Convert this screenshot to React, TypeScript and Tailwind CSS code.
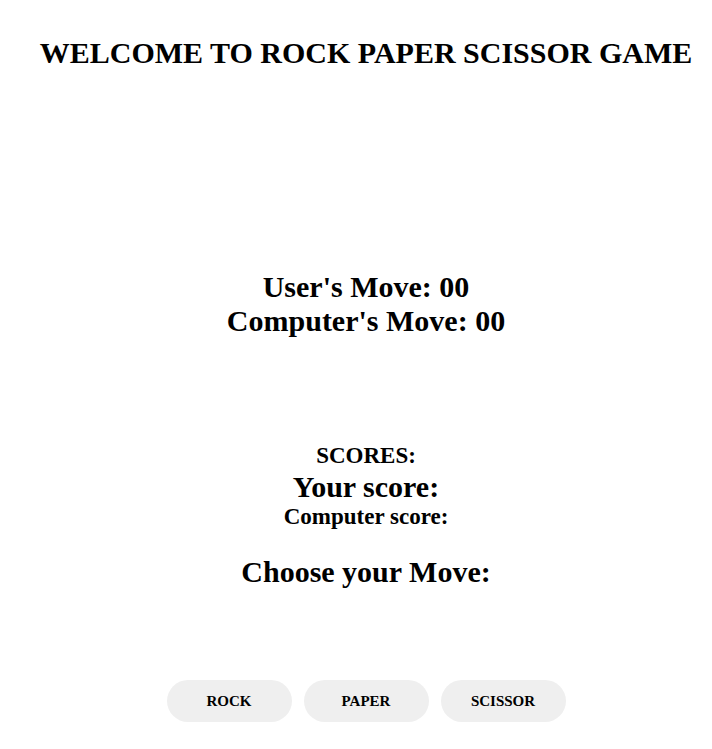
export default function App() {
  return (
    <div className="min-h-[749px] bg-white text-black text-center pl-[20px] font-['Liberation_Serif','Times_New_Roman',serif]">
      <h1 className="pt-[35px] text-[30px] font-bold leading-[36px]">WELCOME TO ROCK PAPER SCISSOR GAME</h1>
      <div className="mt-[199px] text-[30px] font-bold leading-[34px]">
        <div>User's Move: 00</div>
        <div>Computer's Move: 00</div>
      </div>
      <div className="mt-[104px] font-bold">
        <div className="text-[23px] leading-[28px]">SCORES:</div>
        <div className="text-[30px] leading-[33px]">Your score:</div>
        <div className="text-[23px] leading-[28px]">Computer score:</div>
      </div>
      <div className="mt-[24px] text-[30px] font-bold leading-[34px]">Choose your Move:</div>
      <div className="mt-[91px] flex justify-center gap-[12px]">
        <button className="w-[125px] h-[42px] rounded-full bg-[#efefef] text-[15px] font-bold">ROCK</button>
        <button className="w-[125px] h-[42px] rounded-full bg-[#efefef] text-[15px] font-bold">PAPER</button>
        <button className="w-[125px] h-[42px] rounded-full bg-[#efefef] text-[15px] font-bold">SCISSOR</button>
      </div>
    </div>
  );
}
